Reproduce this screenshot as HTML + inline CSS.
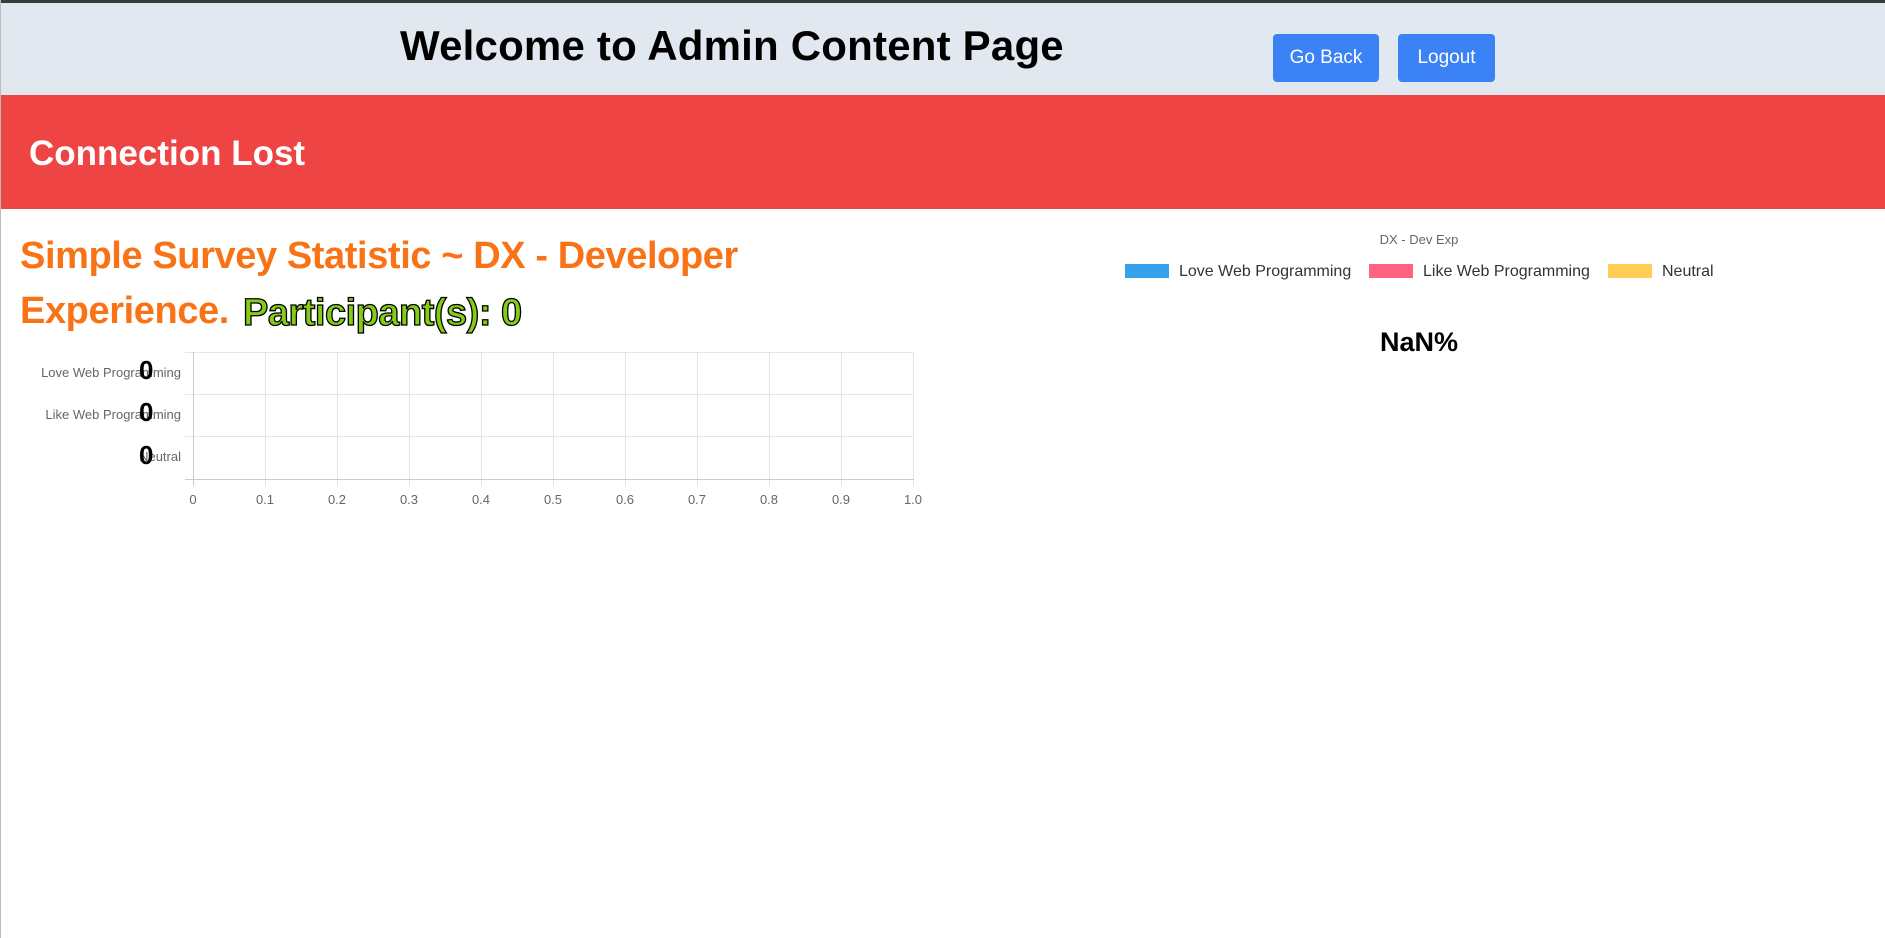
<!DOCTYPE html>
<html><head><meta charset="utf-8"><style>
*{margin:0;padding:0;box-sizing:border-box}
body{width:1885px;height:938px;background:#fff;font-family:"Liberation Sans",sans-serif;position:relative;overflow:hidden;border-left:1px solid #bbb}
.top{position:absolute;left:0;top:0;width:1885px;height:3px;background:#3a3a3a}
.hdr{position:absolute;left:0;top:3px;width:1885px;height:92px;background:#e2e8f0}
.title{position:absolute;left:399px;top:22px;font-size:42px;font-weight:bold;color:#000;letter-spacing:0.2px}
.btn{position:absolute;top:34px;height:48px;background:#3b82f6;color:#fff;font-size:19px;border-radius:4px;text-align:center;line-height:48px}
.red{position:absolute;left:0;top:95px;width:1885px;height:114px;background:#ef4444}
.cl{position:absolute;left:28px;top:134px;font-size:35px;font-weight:bold;color:#fff}
.s{position:absolute;left:19px;font-size:38px;font-weight:bold;color:#f97316;letter-spacing:-0.4px}
.p{position:absolute;left:242px;top:292px;font-size:38px;font-weight:bold;color:#84cc16;-webkit-text-stroke:1.3px #000;letter-spacing:-0.5px}
.yl{position:absolute;font-size:13px;color:#666;text-align:right;width:180px;left:0}
.z{position:absolute;left:138px;font-size:26px;font-weight:bold;color:#000}
.xt{position:absolute;top:492px;font-size:13px;color:#666;width:40px;margin-left:-20px;text-align:center}
.lg{position:absolute;top:263px;font-size:16px;color:#333}
.bx{position:absolute;top:264px;width:44px;height:14px}
</style></head><body>
<div class="top"></div>
<div class="hdr"></div>
<div class="title">Welcome to Admin Content Page</div>
<div class="btn" style="left:1272px;width:106px">Go Back</div>
<div class="btn" style="left:1397px;width:97px">Logout</div>
<div class="red"></div>
<div class="cl">Connection Lost</div>
<div class="s" style="top:235px">Simple Survey Statistic ~ DX - Developer</div>
<div class="s" style="top:290px">Experience.</div>
<div class="p">Participant(s): 0</div>
<svg style="position:absolute;left:0;top:0" width="940" height="520">
<g stroke="#e5e5e5" stroke-width="1">
<line x1="184" y1="352.5" x2="913" y2="352.5"/><line x1="184" y1="394.5" x2="913" y2="394.5"/><line x1="184" y1="436.5" x2="913" y2="436.5"/>
<line x1="264.5" y1="352" x2="264.5" y2="486"/><line x1="336.5" y1="352" x2="336.5" y2="486"/><line x1="408.5" y1="352" x2="408.5" y2="486"/><line x1="480.5" y1="352" x2="480.5" y2="486"/><line x1="552.5" y1="352" x2="552.5" y2="486"/><line x1="624.5" y1="352" x2="624.5" y2="486"/><line x1="696.5" y1="352" x2="696.5" y2="486"/><line x1="768.5" y1="352" x2="768.5" y2="486"/><line x1="840.5" y1="352" x2="840.5" y2="486"/><line x1="912.5" y1="352" x2="912.5" y2="486"/>
</g>
<g stroke="#ccc"><line x1="192.5" y1="352" x2="192.5" y2="486"/><line x1="184" y1="479.5" x2="913" y2="479.5"/></g>
</svg>
<div class="yl" style="top:365px">Love Web Programming</div>
<div class="yl" style="top:407px">Like Web Programming</div>
<div class="yl" style="top:449px">Neutral</div>
<div class="z" style="top:355px">0</div>
<div class="z" style="top:397px">0</div>
<div class="z" style="top:440px">0</div>
<div class="xt" style="left:192px">0</div><div class="xt" style="left:264px">0.1</div><div class="xt" style="left:336px">0.2</div><div class="xt" style="left:408px">0.3</div><div class="xt" style="left:480px">0.4</div><div class="xt" style="left:552px">0.5</div><div class="xt" style="left:624px">0.6</div><div class="xt" style="left:696px">0.7</div><div class="xt" style="left:768px">0.8</div><div class="xt" style="left:840px">0.9</div><div class="xt" style="left:912px">1.0</div>
<div style="position:absolute;left:1318px;width:200px;top:232px;text-align:center;font-size:13px;color:#666">DX - Dev Exp</div>
<div class="bx" style="left:1124px;background:#36a2eb"></div><div class="lg" style="left:1178px">Love Web Programming</div>
<div class="bx" style="left:1368px;background:#ff6384"></div><div class="lg" style="left:1422px">Like Web Programming</div>
<div class="bx" style="left:1607px;background:#ffcd56"></div><div class="lg" style="left:1661px">Neutral</div>
<div style="position:absolute;left:1318px;width:200px;top:327px;text-align:center;font-size:27px;font-weight:bold;color:#000">NaN%</div>
</body></html>
